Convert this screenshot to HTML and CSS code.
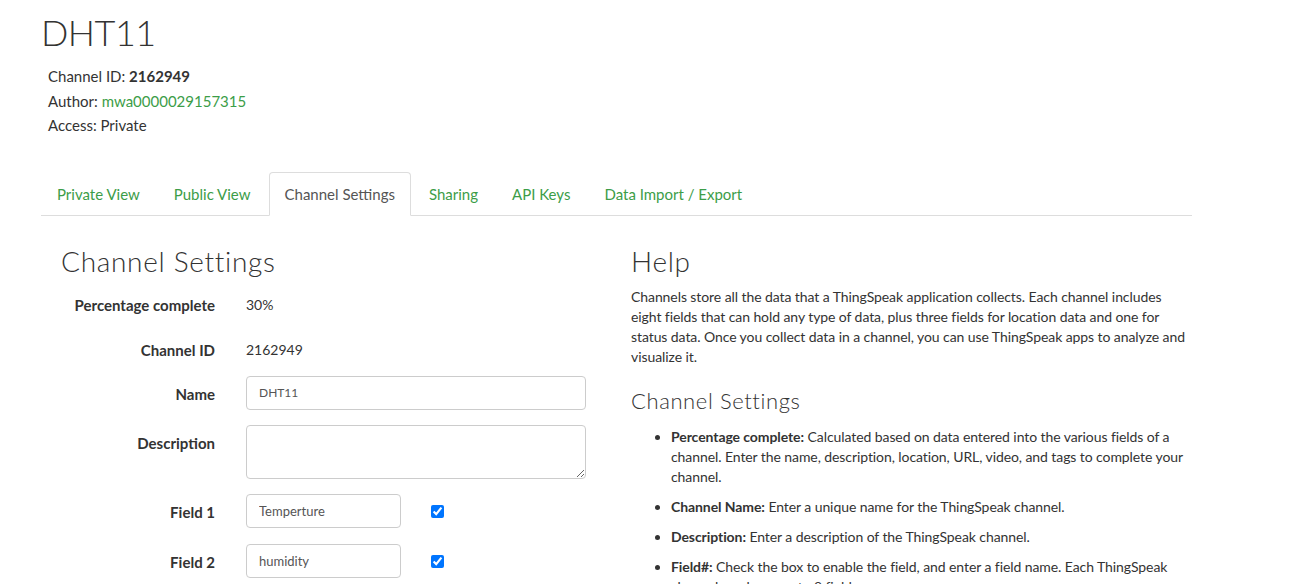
FILE: index.html
```html
<!DOCTYPE html>
<html>
<head>
<meta charset="utf-8">
<link rel="stylesheet" href="styles.css">
</head>
<body>
<div class="container">
  <h1 class="title">DHT11</h1>
  <div class="meta">
    <p>Channel ID: <strong>2162949</strong></p>
    <p>Author: <a href="#">mwa0000029157315</a></p>
    <p>Access: Private</p>
  </div>

  <ul class="tabs">
    <li><a href="#">Private View</a></li>
    <li><a href="#">Public View</a></li>
    <li class="active"><a href="#">Channel Settings</a></li>
    <li><a href="#">Sharing</a></li>
    <li><a href="#">API Keys</a></li>
    <li><a href="#">Data Import / Export</a></li>
  </ul>

  <div class="row">
    <div class="col left">
      <h2>Channel Settings</h2>
      <form class="form">
        <div class="frow static first">
          <label>Percentage complete</label>
          <span class="value">30%</span>
        </div>
        <div class="frow static">
          <label>Channel ID</label>
          <span class="value">2162949</span>
        </div>
        <div class="frow">
          <label>Name</label>
          <input class="input wide mono" type="text" value="DHT11">
        </div>
        <div class="frow">
          <label>Description</label>
          <textarea class="input wide area"></textarea>
        </div>
        <div class="frow field">
          <label>Field 1</label>
          <input class="input narrow" type="text" value="Temperture">
          <input class="check" type="checkbox" checked>
        </div>
        <div class="frow field">
          <label>Field 2</label>
          <input class="input narrow" type="text" value="humidity">
          <input class="check" type="checkbox" checked>
        </div>
      </form>
    </div>
    <div class="col right">
      <h2>Help</h2>
      <p class="help">Channels store all the data that a ThingSpeak application collects. Each channel includes eight fields that can hold any type of data, plus three fields for location data and one for status data. Once you collect data in a channel, you can use ThingSpeak apps to analyze and visualize it.</p>
      <h3>Channel Settings</h3>
      <ul class="list">
        <li><strong>Percentage complete:</strong> Calculated based on data entered into the various fields of a channel. Enter the name, description, location, URL, video, and tags to complete your channel.</li>
        <li><strong>Channel Name:</strong> Enter a unique name for the ThingSpeak channel.</li>
        <li><strong>Description:</strong> Enter a description of the ThingSpeak channel.</li>
        <li><strong>Field#:</strong> Check the box to enable the field, and enter a field name. Each ThingSpeak channel can have up to 8 fields.</li>
      </ul>
    </div>
  </div>
</div>
</body>
</html>
```

FILE: styles.css
```css
* { box-sizing: border-box; }

html, body {
  margin: 0;
  padding: 0;
  background: #fff;
  color: #333;
  font-family: "Lato", "Open Sans", sans-serif;
  font-size: 14px;
  line-height: 20px;
  overflow: hidden;
}

a { color: #3c9d48; text-decoration: none; }

.container {
  width: 1151px;
  margin-left: 41px;
}

.title {
  margin: 0;
  padding-top: 12px;
  font-family: "Lato", sans-serif;
  font-weight: 300;
  font-size: 36px;
  line-height: 40px;
  letter-spacing: -0.5px;
  color: #333;
}

.meta {
  padding-left: 7px;
  margin-top: 12px;
}

.meta p {
  margin: 0;
  font-size: 15px;
  line-height: 24.5px;
}

.meta strong { font-weight: 700; }

.tabs {
  list-style: none;
  margin: 34px 0 0;
  padding: 0;
  display: flex;
  border-bottom: 1px solid #ddd;
}

.tabs li {
  margin-bottom: -1px;
  margin-right: 2px;
}

.tabs a {
  display: block;
  padding: 10px 15px 10px;
  font-size: 15px;
  line-height: 22px;
  border: 1px solid transparent;
  border-radius: 4px 4px 0 0;
  color: #3c9d48;
}

.tabs .active a {
  color: #555;
  background: #fff;
  border-color: #ddd;
  border-bottom-color: #fff;
}

.row {
  display: flex;
  margin-top: 30px;
}

.left { width: 575px; padding-left: 20px; }
.right { width: 576px; padding-left: 15px; }

h2 {
  margin: 0 0 10px;
  font-family: "Lato", sans-serif;
  font-weight: 300;
  font-size: 28px;
  line-height: 31px;
  letter-spacing: 0.7px;
  color: #333;
}

h3 {
  margin: 22px 0 14px;
  font-family: "Lato", sans-serif;
  font-weight: 300;
  font-size: 22px;
  line-height: 24px;
  letter-spacing: 0.6px;
  color: #333;
}

.form { margin: 0; }

.frow {
  display: flex;
  align-items: flex-start;
  margin-bottom: 15px;
}

.frow.static { height: 29px; }
.frow.static.first { height: 30px; }
.frow.field { margin-bottom: 16px; }

.frow label {
  width: 154px;
  flex: none;
  text-align: right;
  font-weight: 700;
  font-size: 15px;
  padding-top: 8px;
  line-height: 20px;
  margin-right: 31px;
}

.value {
  padding-top: 8px;
  line-height: 20px;
  font-size: 14px;
}

.input {
  display: block;
  height: 34px;
  border: 1px solid #ccc;
  border-radius: 4px;
  padding: 6px 12px;
  font-family: "Lato", sans-serif;
  font-size: 13px;
  color: #555;
  background: #fff;
}

.wide { width: 340px; }
.narrow { width: 155px; }
.area { height: 54px; resize: vertical; }
.mono { font-size: 12px; }

.check {
  width: 13px;
  height: 13px;
  margin: 11px 0 0 30px;
  accent-color: #0075ff;
}

.help { margin: 0; letter-spacing: -0.08px; }

.list {
  margin: 0;
  padding-left: 40px;
  letter-spacing: -0.08px;
}

.list li { margin-bottom: 10px; }
```
